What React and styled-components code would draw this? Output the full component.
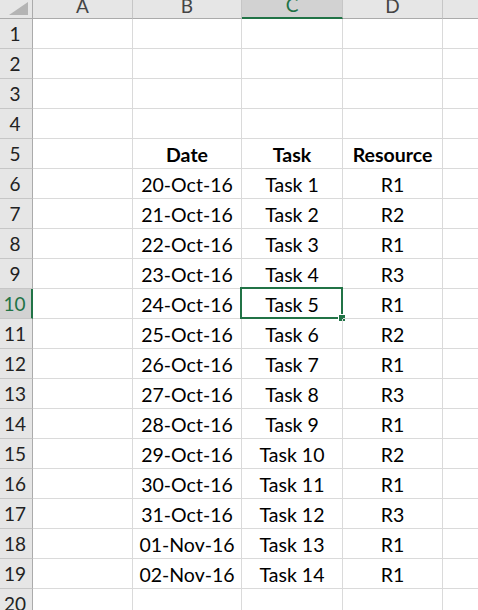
import React from "react";
import styled, { createGlobalStyle } from "styled-components";

const GlobalStyle = createGlobalStyle`
  html, body {
    margin: 0;
    padding: 0;
    background: #ffffff;
  }
  body {
    font-family: Lato, "Open Sans", "Liberation Sans", sans-serif;
    overflow: hidden;
  }
`;

const COLS = ["A", "B", "C", "D", "E"];
const WIDTHS = "33px 100px 109px 101px 100px 100px";

const rows = [
  ["20-Oct-16", "Task 1", "R1"],
  ["21-Oct-16", "Task 2", "R2"],
  ["22-Oct-16", "Task 3", "R1"],
  ["23-Oct-16", "Task 4", "R3"],
  ["24-Oct-16", "Task 5", "R1"],
  ["25-Oct-16", "Task 6", "R2"],
  ["26-Oct-16", "Task 7", "R1"],
  ["27-Oct-16", "Task 8", "R3"],
  ["28-Oct-16", "Task 9", "R1"],
  ["29-Oct-16", "Task 10", "R2"],
  ["30-Oct-16", "Task 11", "R1"],
  ["31-Oct-16", "Task 12", "R3"],
  ["01-Nov-16", "Task 13", "R1"],
  ["02-Nov-16", "Task 14", "R1"],
];

const Viewport = styled.div`
  width: 100%;
  height: 610px;
  overflow: hidden;
`;

const Sheet = styled.div`
  display: grid;
  grid-template-columns: ${WIDTHS};
  grid-template-rows: 19px;
  grid-auto-rows: 30px;
  width: max-content;
`;

const Corner = styled.div`
  position: relative;
  background: #e6e6e6;
  border-right: 1px solid #ababab;
  border-bottom: 1px solid #ababab;
  box-sizing: border-box;

  &::after {
    content: "";
    position: absolute;
    right: 4px;
    bottom: 3px;
    width: 0;
    height: 0;
    border-left: 19px solid transparent;
    border-bottom: 13px solid #b4b4b4;
  }
`;

const ColHead = styled.div`
  background: ${(p) => (p.$active ? "#d2d2d2" : "#e6e6e6")};
  color: ${(p) => (p.$active ? "#217346" : "#444444")};
  border-right: 1px solid #c6c6c6;
  border-bottom: ${(p) => (p.$active ? "2px solid #217346" : "1px solid #ababab")};
  box-sizing: border-box;
  font-size: 19px;
  line-height: 1;
  display: flex;
  align-items: flex-end;
  justify-content: center;
  overflow: hidden;
  padding-bottom: 3px;
`;

const RowHead = styled.div`
  background: ${(p) => (p.$active ? "#d2d2d2" : "#e6e6e6")};
  color: ${(p) => (p.$active ? "#217346" : "#222222")};
  border-right: ${(p) => (p.$active ? "2px solid #217346" : "1px solid #ababab")};
  border-bottom: 1px solid #c6c6c6;
  box-sizing: border-box;
  font-size: 19px;
  display: flex;
  align-items: center;
  justify-content: center;
  padding-right: 2px;
`;

const Cell = styled.div`
  position: relative;
  border-right: 1px solid #dadada;
  border-bottom: 1px solid #dadada;
  box-sizing: border-box;
  font-size: 19.5px;
  font-weight: ${(p) => (p.$bold ? 700 : 400)};
  color: #000000;
  display: flex;
  align-items: center;
  justify-content: center;
  padding-top: 1px;
  white-space: nowrap;
`;

const Selection = styled.div`
  position: absolute;
  left: -2px;
  top: -2px;
  right: -1px;
  bottom: -1px;
  border: 2px solid #217346;
  pointer-events: none;

  &::after {
    content: "";
    position: absolute;
    right: -5px;
    bottom: -5px;
    width: 6px;
    height: 6px;
    background: #217346;
    border: 1px solid #ffffff;
  }
`;

function Row({ n, values, bold }) {
  const active = n === 10;
  return (
    <>
      <RowHead $active={active}>{n}</RowHead>
      <Cell />
      {[0, 1, 2].map((i) => (
        <Cell key={i} $bold={bold}>
          {values ? values[i] : ""}
          {active && i === 1 && <Selection />}
        </Cell>
      ))}
      <Cell />
    </>
  );
}

export default function App() {
  const all = [];
  for (let n = 1; n <= 20; n++) {
    if (n === 5) all.push(<Row key={n} n={n} values={["Date", "Task", "Resource"]} bold />);
    else if (n >= 6 && n <= 19) all.push(<Row key={n} n={n} values={rows[n - 6]} />);
    else all.push(<Row key={n} n={n} />);
  }
  return (
    <>
      <GlobalStyle />
      <Viewport>
        <Sheet>
          <Corner />
          {COLS.map((c) => (
            <ColHead key={c} $active={c === "C"}>
              {c}
            </ColHead>
          ))}
          {all}
        </Sheet>
      </Viewport>
    </>
  );
}
